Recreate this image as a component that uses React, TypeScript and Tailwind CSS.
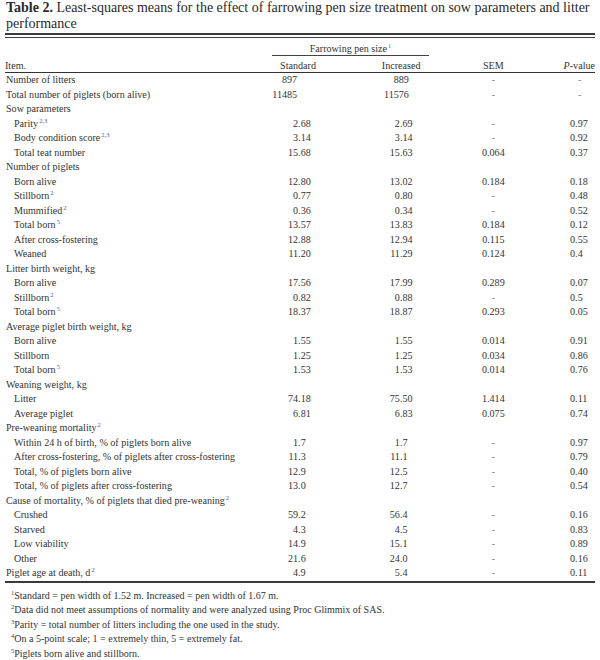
import React from "react";

type Vals = [string, string, string, string];
type Row = { label: string; sup?: string; indent?: boolean; vals?: Vals };

const rows: Row[] = [
  { label: "Number of litters", vals: ["897", "889", "-", "-"] },
  { label: "Total number of piglets (born alive)", vals: ["11485", "11576", "-", "-"] },
  { label: "Sow parameters" },
  { label: "Parity", sup: "2,3", indent: true, vals: ["2.68", "2.69", "-", "0.97"] },
  { label: "Body condition score", sup: "2,3", indent: true, vals: ["3.14", "3.14", "-", "0.92"] },
  { label: "Total teat number", indent: true, vals: ["15.68", "15.63", "0.064", "0.37"] },
  { label: "Number of piglets" },
  { label: "Born alive", indent: true, vals: ["12.80", "13.02", "0.184", "0.18"] },
  { label: "Stillborn", sup: "2", indent: true, vals: ["0.77", "0.80", "-", "0.48"] },
  { label: "Mummified", sup: "2", indent: true, vals: ["0.36", "0.34", "-", "0.52"] },
  { label: "Total born", sup: "5", indent: true, vals: ["13.57", "13.83", "0.184", "0.12"] },
  { label: "After cross-fostering", indent: true, vals: ["12.88", "12.94", "0.115", "0.55"] },
  { label: "Weaned", indent: true, vals: ["11.20", "11.29", "0.124", "0.4"] },
  { label: "Litter birth weight, kg" },
  { label: "Born alive", indent: true, vals: ["17.56", "17.99", "0.289", "0.07"] },
  { label: "Stillborn", sup: "2", indent: true, vals: ["0.82", "0.88", "-", "0.5"] },
  { label: "Total born", sup: "5", indent: true, vals: ["18.37", "18.87", "0.293", "0.05"] },
  { label: "Average piglet birth weight, kg" },
  { label: "Born alive", indent: true, vals: ["1.55", "1.55", "0.014", "0.91"] },
  { label: "Stillborn", indent: true, vals: ["1.25", "1.25", "0.034", "0.86"] },
  { label: "Total born", sup: "5", indent: true, vals: ["1.53", "1.53", "0.014", "0.76"] },
  { label: "Weaning weight, kg" },
  { label: "Litter", indent: true, vals: ["74.18", "75.50", "1.414", "0.11"] },
  { label: "Average piglet", indent: true, vals: ["6.81", "6.83", "0.075", "0.74"] },
  { label: "Pre-weaning mortality", sup: "2" },
  { label: "Within 24 h of birth, % of piglets born alive", indent: true, vals: ["1.7", "1.7", "-", "0.97"] },
  { label: "After cross-fostering, % of piglets after cross-fostering", indent: true, vals: ["11.3", "11.1", "-", "0.79"] },
  { label: "Total, % of piglets born alive", indent: true, vals: ["12.9", "12.5", "-", "0.40"] },
  { label: "Total, % of piglets after cross-fostering", indent: true, vals: ["13.0", "12.7", "-", "0.54"] },
  { label: "Cause of mortality, % of piglets that died pre-weaning", sup: "2" },
  { label: "Crushed", indent: true, vals: ["59.2", "56.4", "-", "0.16"] },
  { label: "Starved", indent: true, vals: ["4.3", "4.5", "-", "0.83"] },
  { label: "Low viability", indent: true, vals: ["14.9", "15.1", "-", "0.89"] },
  { label: "Other", indent: true, vals: ["21.6", "24.0", "-", "0.16"] },
  { label: "Piglet age at death, d", sup: "2", vals: ["4.9", "5.4", "-", "0.11"] },
];

const footnotes: [string, string][] = [
  ["1", "Standard = pen width of 1.52 m. Increased = pen width of 1.67 m."],
  ["2", "Data did not meet assumptions of normality and were analyzed using Proc Glimmix of SAS."],
  ["3", "Parity = total number of litters including the one used in the study."],
  ["4", "On a 5-point scale; 1 = extremely thin, 5 = extremely fat."],
  ["5", "Piglets born alive and stillborn."],
];

type ColCfg = { cell: string; intPart: string; whole: string; dash: string };

const cols: ColCfg[] = [
  { cell: "w-[68px]", intPart: "w-[27px]", whole: "w-[26px]", dash: "pl-[25px]" },
  { cell: "w-[89px]", intPart: "w-[61px]", whole: "w-[70px]", dash: "pl-[58px]" },
  { cell: "w-[132px]", intPart: "w-[62px]", whole: "w-[66px]", dash: "pl-[64px]" },
  { cell: "w-[36px]", intPart: "w-[16px]", whole: "w-[20px]", dash: "pl-[19px]" },
];

function Sup({ children, blue = true }: { children: React.ReactNode; blue?: boolean }) {
  return (
    <span
      className={
        "relative -top-[4px] ml-[1px] text-[6.5px] leading-none " +
        (blue ? "text-[#4a5fb0]" : "text-[#444]")
      }
    >
      {children}
    </span>
  );
}

function Val({ v, cfg, center }: { v: string; cfg: ColCfg; center?: boolean }) {
  if (center) {
    return (
      <div className={cfg.cell + " text-center " + (v === "-" ? "text-[#888]" : "")}>{v}</div>
    );
  }
  if (v === "-") {
    return (
      <div className={cfg.cell + " text-[#888]"}>
        <span className={"inline-block " + cfg.dash}>-</span>
      </div>
    );
  }
  const i = v.indexOf(".");
  if (i < 0) {
    return (
      <div className={cfg.cell + " whitespace-nowrap"}>
        <span className={"inline-block text-right " + cfg.whole}>{v}</span>
      </div>
    );
  }
  return (
    <div className={cfg.cell + " whitespace-nowrap"}>
      <span className={"inline-block text-right " + cfg.intPart}>{v.slice(0, i)}</span>
      <span>{v.slice(i)}</span>
    </div>
  );
}

export default function App() {
  return (
    <div className="w-[600px] h-[660px] overflow-hidden bg-white text-[#333] font-['Liberation_Serif','Times_New_Roman',serif]">
      <div className="pl-[6px] pt-0 text-[14px] leading-[15.5px] text-[#2a2a2a]">
        <div className="whitespace-nowrap">
          <span className="font-bold">Table 2.</span> Least-squares means for the effect of farrowing pen size treatment on sow parameters and litter
        </div>
        <div className="whitespace-nowrap">performance</div>
      </div>

      <div className="ml-[5px] w-[590px] text-[10.1px]">
        <div className="mt-[2px] h-[1.5px] bg-[#3a3a3a]" />
        <div className="mt-[2px] h-[1.5px] bg-[#3a3a3a]" />

        <div className="mt-[5px] flex h-[12px] items-center leading-[12px]">
          <div className="w-[267px]" />
          <div className="w-[157px] text-center">
            Farrowing pen size<Sup>1</Sup>
          </div>
        </div>
        <div className="flex">
          <div className="w-[267px]" />
          <div className="h-[1px] w-[157px] bg-[#444]" />
        </div>
        <div className="flex h-[16px] items-center pt-[3px] leading-[13px]">
          <div className="w-[267px]">Item.</div>
          <div className="w-[54px] text-center">Standard</div>
          <div className="w-[50px]" />
          <div className="w-[53px] text-center">Increased</div>
          <div className="w-[132px] text-center">SEM</div>
          <div className="w-[36px] text-right">
            <span className="italic">P</span>-value
          </div>
        </div>
        <div className="h-[1.2px] bg-[#333]" />

        <div>
          {rows.map((r, idx) => (
            <div key={idx} className="flex h-[14.5px] items-center leading-[14.5px]">
              <div className={"w-[267px] whitespace-nowrap " + (r.indent ? "pl-[9px]" : "pl-[1px]")}>
                {r.label}
                {r.sup && <Sup>{r.sup}</Sup>}
              </div>
              {r.vals && (
                <>
                  <Val v={r.vals[0]} cfg={cols[0]} />
                  <Val v={r.vals[1]} cfg={cols[1]} />
                  <Val v={r.vals[2]} cfg={cols[2]} center />
                  <Val v={r.vals[3]} cfg={cols[3]} />
                </>
              )}
            </div>
          ))}
        </div>
        <div className="h-[2px] bg-[#3a3a3a]" />
      </div>

      <div className="mt-[6px] pl-[10px] text-[10px] leading-[14.5px] text-[#333]">
        {footnotes.map(([n, t]) => (
          <div key={n} className="whitespace-nowrap">
            <Sup blue={false}>{n}</Sup>
            {t}
          </div>
        ))}
      </div>
    </div>
  );
}
